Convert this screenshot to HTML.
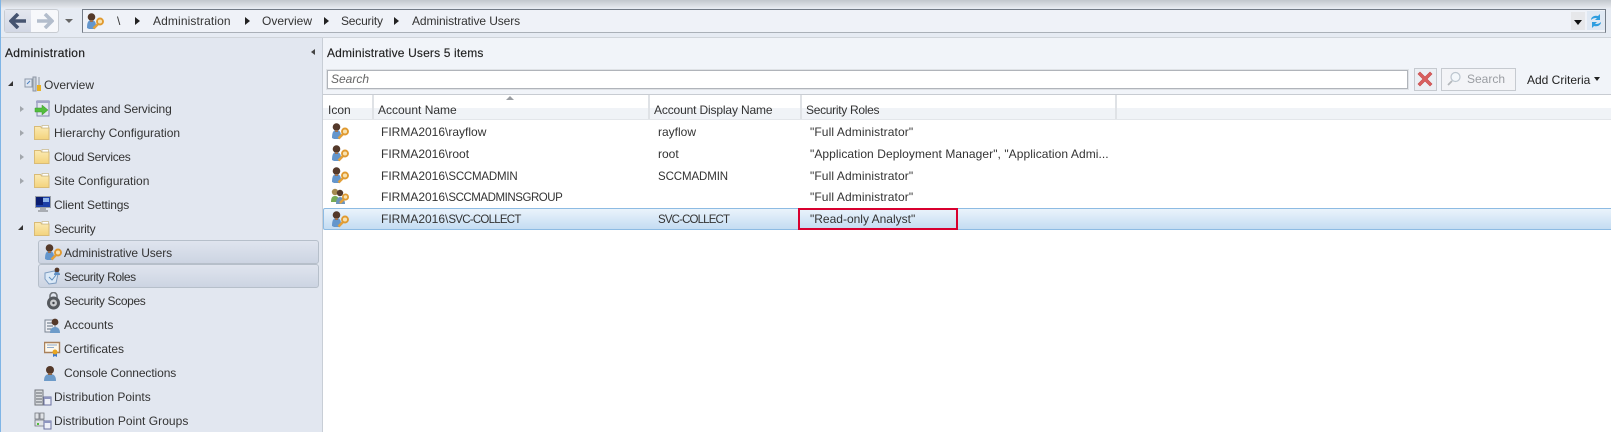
<!DOCTYPE html>
<html><head><meta charset="utf-8"><style>
html,body{margin:0;padding:0}
body{width:1611px;height:432px;overflow:hidden;position:relative;background:#fff;font-family:"Liberation Sans",sans-serif;font-size:12px;color:#2b2b2b}
#w{position:absolute;left:0;top:0;width:1611px;height:432px;overflow:hidden;filter:blur(.3px)}
.a{position:absolute}
.t{position:absolute;white-space:nowrap;line-height:16px;height:16px;font-size:12px;color:#333}
.c{font-size:11.5px}
svg.i{position:absolute;width:18px;height:18px;overflow:visible}
.tri{position:absolute;width:0;height:0}
.ex{position:absolute;left:20px;width:0;height:0;border-top:3.5px solid transparent;border-bottom:3.5px solid transparent;border-left:4.500px solid #a2a7ad}
</style></head><body><div id="w">
<svg width="0" height="0" style="position:absolute"><defs>
<linearGradient id="fg" x1="0" y1="0" x2="0" y2="1"><stop offset="0" stop-color="#fbeab4"/><stop offset="1" stop-color="#f3d37c"/></linearGradient>
<symbol id="admin" viewBox="0 0 18 18"><path d="M1 16c0-5 1-8 4.500-8S10 11 10 14l-1 3H3z" fill="#6496cc"/><circle cx="5.500" cy="5" r="3.800" fill="#54392a"/><path d="M4 8h3v2H4z" fill="#9a7050"/><path d="M12 12l-4.500 4.500" stroke="#e3a03a" stroke-width="2.600"/><circle cx="14" cy="9.500" r="3" fill="#f8e2b0" stroke="#e09a30" stroke-width="1.900"/></symbol>
<symbol id="group" viewBox="0 0 18 18"><path d="M0 15c0-4 1-6 4-6s4 2 4 6z" fill="#76ab56"/><circle cx="4" cy="5" r="3.200" fill="#a58a50"/><path d="M5 17c0-5 2-7 4-7s5 2 5 7z" fill="#6b94bd"/><circle cx="9" cy="6" r="3.200" fill="#54392a"/><path d="M13 12l-4 4" stroke="#e3a03a" stroke-width="2.400"/><circle cx="14.500" cy="10" r="2.600" fill="#f8e2b0" stroke="#e09a30" stroke-width="1.800"/></symbol>
<symbol id="folder" viewBox="0 0 18 18"><path d="M.5 2.500h6l1 1.500h7.500v11.500H.5z" fill="url(#fg)" stroke="#d9bb76"/><path d="M8 1.500h6.500v2.500H8z" fill="#fff" stroke="#c9b98a" stroke-width=".7"/></symbol>
<symbol id="user" viewBox="0 0 18 18"><path d="M3 17c0-5 2-7 6-7s6 2 6 7z" fill="#6d9bc9"/><circle cx="9" cy="6" r="4" fill="#54392a"/><path d="M7 9h4v2H7z" fill="#8a6448"/></symbol>
<symbol id="server" viewBox="0 0 18 18"><path d="M1 2h8v15H1z" fill="#d8dbde" stroke="#71767c"/><path d="M2 5h6M2 8h6M2 11h6M2 14h6" stroke="#62676d"/><path d="M10 9h7v8h-7z" fill="#eef0f8" stroke="#6a70a0"/><path d="M10 9h7v2h-7z" fill="#8e95c0"/></symbol>
</defs></svg>

<!-- top strip -->
<div class="a" style="left:0;top:0;width:1611px;height:8px;background:linear-gradient(#c2c7cd,#e6e9ee)"></div>
<div class="a" style="left:0;top:8px;width:1611px;height:29px;background:#e6ebf3"></div>
<div class="a" style="left:0;top:37px;width:1611px;height:1px;background:#cfd4da"></div>
<div class="a" style="left:0;top:0;width:1px;height:432px;background:#7fb5e6"></div>

<!-- nav buttons -->
<div class="a" style="left:4px;top:9px;width:53px;height:22px;border:1px solid #c8ccd2;border-radius:3px;background:#f7f8fb"></div>
<div class="a" style="left:5px;top:10px;width:26px;height:22px;background:linear-gradient(#e4e7ef,#d2d7e4)"></div>
<svg class="a" style="left:9px;top:13px" width="18" height="16" viewBox="0 0 18 16"><path d="M9 1L2 8l7 7M3 8h14" fill="none" stroke="#465470" stroke-width="3.600"/></svg>
<svg class="a" style="left:36px;top:13px" width="18" height="16" viewBox="0 0 18 16"><path d="M9 1l7 7-7 7M15 8H1" fill="none" stroke="#b3bdcc" stroke-width="3.600"/></svg>
<div class="tri" style="left:65px;top:19px;border-left:4px solid transparent;border-right:4px solid transparent;border-top:4px solid #666"></div>

<!-- address bar -->
<div class="a" style="left:82px;top:9px;width:1522px;height:22px;border:1px solid #737b86;border-bottom-color:#aab0b8;background:#eff2f8"></div>
<svg class="i" style="left:86px;top:12px"><use href="#admin"/></svg>
<div class="t" style="left:117px;top:13px">\</div>
<div class="tri" style="left:135px;top:17px;border-top:4px solid transparent;border-bottom:4px solid transparent;border-left:5px solid #222"></div>
<div class="t" style="left:153px;top:13px;letter-spacing:.12px">Administration</div>
<div class="tri" style="left:245px;top:17px;border-top:4px solid transparent;border-bottom:4px solid transparent;border-left:5px solid #222"></div>
<div class="t" style="left:262px;top:13px">Overview</div>
<div class="tri" style="left:324px;top:17px;border-top:4px solid transparent;border-bottom:4px solid transparent;border-left:5px solid #222"></div>
<div class="t" style="left:341px;top:13px;letter-spacing:-.2px">Security</div>
<div class="tri" style="left:394px;top:17px;border-top:4px solid transparent;border-bottom:4px solid transparent;border-left:5px solid #222"></div>
<div class="t" style="left:412px;top:13px;letter-spacing:-.1px">Administrative Users</div>
<div class="a" style="left:1571px;top:12px;width:14px;height:18px;background:#e6e7ea"></div>
<div class="tri" style="left:1574px;top:20px;border-left:4px solid transparent;border-right:4px solid transparent;border-top:5px solid #111"></div>
<div class="a" style="left:1587px;top:11px;width:18px;height:19px;background:#dfe8f3"></div>
<svg class="a" style="left:1589px;top:13px" width="14" height="16" viewBox="0 0 14 16"><path d="M2 7c0-3 3-5 7-4l2-2v6H6l2-2C6 5 4 5 2 7zM12 9c0 3-3 5-7 4l-2 2V9h5l-2 2c2 0 4 0 6-2z" fill="#2f9ee0"/></svg>

<!-- sidebar -->
<div class="a" style="left:1px;top:38px;width:321px;height:394px;background:#e2e7f0"></div>
<div class="a" style="left:322px;top:38px;width:1px;height:394px;background:#c8ced6"></div>
<div class="t" style="left:5px;top:45px;color:#222;-webkit-text-stroke:.2px #222;letter-spacing:.3px">Administration</div>
<div class="tri" style="left:311px;top:49px;border-top:3px solid transparent;border-bottom:3px solid transparent;border-right:4px solid #444"></div>

<div class="tri" style="left:8px;top:81px;border-left:5px solid transparent;border-bottom:5px solid #333"></div>
<svg class="a" style="left:24px;top:75px" width="18" height="18" viewBox="0 0 18 18"><path d="M1 4h7v8H1z" fill="#dfe6f2" stroke="#8d99aa"/><path d="M3 9l3-3" stroke="#4a80c0"/><path d="M9 2h3v14H9z" fill="#c8d0da" stroke="#8d96a3"/><path d="M14 2h2v8h-2z" fill="#b9c0ca"/><path d="M13 10h4v6h-4z" fill="#e7b126"/></svg>
<div class="t" style="left:44px;top:77px">Overview</div>

<div class="ex" style="top:106px"></div>
<svg class="a" style="left:34px;top:100px" width="18" height="18" viewBox="0 0 18 18"><path d="M3 1h12v15H3z" fill="#e3e5f0" stroke="#8185ab"/><path d="M2 1h14v2H2z" fill="#a2a5c7"/><path d="M1 8h7V5l6 5-6 5v-3H1z" fill="#53bd3d" stroke="#3b9a2e" stroke-width=".5"/></svg>
<div class="t" style="left:54px;top:101px;letter-spacing:-.15px">Updates and Servicing</div>

<div class="ex" style="top:130px"></div>
<svg class="i" style="left:34px;top:124px"><use href="#folder"/></svg>
<div class="t" style="left:54px;top:125px">Hierarchy Configuration</div>

<div class="ex" style="top:154px"></div>
<svg class="i" style="left:34px;top:148px"><use href="#folder"/></svg>
<div class="t" style="left:54px;top:149px;letter-spacing:-.3px">Cloud Services</div>

<div class="ex" style="top:178px"></div>
<svg class="i" style="left:34px;top:172px"><use href="#folder"/></svg>
<div class="t" style="left:54px;top:173px">Site Configuration</div>

<svg class="a" style="left:35px;top:196px" width="16" height="17" viewBox="0 0 16 17"><path d="M0 0h16v12H0z" fill="#9aa0a8"/><path d="M1 1h14v10H1z" fill="#1c3fa8"/><path d="M1 1h7v8H1z" fill="#0b1d70"/><path d="M8 2h6v4H8z" fill="#8eb4ea"/><path d="M5 12h6v2H5zM3 14h10v2H3z" fill="#a9adb3"/></svg>
<div class="t" style="left:54px;top:197px;letter-spacing:-.15px">Client Settings</div>

<div class="tri" style="left:18px;top:225px;border-left:5px solid transparent;border-bottom:5px solid #333"></div>
<svg class="i" style="left:34px;top:220px"><use href="#folder"/></svg>
<div class="t" style="left:54px;top:221px;letter-spacing:-.25px">Security</div>

<div class="a" style="left:38px;top:240px;width:279px;height:22px;border:1px solid #b6bfca;border-radius:3px;background:linear-gradient(#dfe4ee,#ccd4e2)"></div>
<svg class="i" style="left:44px;top:243px"><use href="#admin"/></svg>
<div class="t" style="left:64px;top:245px;letter-spacing:-.1px">Administrative Users</div>

<div class="a" style="left:38px;top:264px;width:279px;height:22px;border:1px solid #b6bfca;border-radius:3px;background:linear-gradient(#dfe4ee,#ccd4e2)"></div>
<svg class="a" style="left:44px;top:267px" width="18" height="18" viewBox="0 0 18 18"><path d="M1 6l9-2 4 3-2 9-7 1-4-5z" fill="#dbe9f7" stroke="#7d9cc0"/><path d="M5 10l3 3 4-5" stroke="#5d8ebf" fill="none"/><circle cx="13" cy="3" r="2.400" fill="#54392a"/><path d="M10 8c0-2 1-3 3-3s3 1 3 3z" fill="#5f8fc4"/></svg>
<div class="t" style="left:64px;top:269px;letter-spacing:-.4px">Security Roles</div>

<svg class="a" style="left:46px;top:292px" width="15" height="18" viewBox="0 0 15 18"><path d="M4 7V4a3.500 3.500 0 0 1 7 0v3" fill="none" stroke="#6d7176" stroke-width="1.600"/><circle cx="7.500" cy="11" r="6.500" fill="#55595e"/><circle cx="7.500" cy="11" r="3.500" fill="#c9cbce"/><circle cx="7.500" cy="11" r="1.200" fill="#40444a"/></svg>
<div class="t" style="left:64px;top:293px;letter-spacing:-.35px">Security Scopes</div>

<svg class="a" style="left:44px;top:316px" width="18" height="18" viewBox="0 0 18 18"><path d="M1 4h10v12H1z" fill="#eef0f5" stroke="#7a8492"/><path d="M3 7h6M3 10h6M3 13h5" stroke="#5f6b7c"/><path d="M6 17c0-4 2-6 5-6s5 2 5 6z" fill="#6d9bc9"/><circle cx="11" cy="6" r="3.400" fill="#54392a"/></svg>
<div class="t" style="left:64px;top:317px">Accounts</div>

<svg class="a" style="left:44px;top:340px" width="17" height="18" viewBox="0 0 17 18"><path d="M.5 2.500h15v10H.5z" fill="#fdf8ec" stroke="#a8805a" stroke-width="1.400"/><path d="M3 5h10M3 7.500h7" stroke="#8faacc"/><path d="M9 13h4v4l-2-1-2 1z" fill="#3f78c8"/><circle cx="11" cy="12" r="2.500" fill="#eaa620"/></svg>
<div class="t" style="left:64px;top:341px">Certificates</div>

<svg class="i" style="left:41px;top:364px"><use href="#user"/></svg>
<div class="t" style="left:64px;top:365px;letter-spacing:-.1px">Console Connections</div>

<svg class="i" style="left:34px;top:388px"><use href="#server"/></svg>
<div class="t" style="left:54px;top:389px">Distribution Points</div>

<svg class="a" style="left:34px;top:412px" width="18" height="18" viewBox="0 0 18 18"><path d="M1 1h4v6H1zM6 1h4v6H6z" fill="#dfe2e6" stroke="#71767c" stroke-width=".8"/><path d="M1 8h9v6H1z" fill="#dfe2e6" stroke="#71767c" stroke-width=".8"/><path d="M3 11h2v2H3z" fill="#53bd3d"/><path d="M10 9h7v8h-7z" fill="#eef0f8" stroke="#6a70a0"/><path d="M10 9h7v2h-7z" fill="#8e95c0"/></svg>
<div class="t" style="left:54px;top:413px;letter-spacing:.04px">Distribution Point Groups</div>

<!-- main top panel -->
<div class="a" style="left:323px;top:38px;width:1288px;height:56px;background:#f1f4f9"></div>
<div class="t" style="left:327px;top:45px;color:#222;-webkit-text-stroke:.15px #222;letter-spacing:.16px">Administrative Users 5 items</div>
<div class="a" style="left:327px;top:70px;width:1079px;height:17px;border:1px solid #b0b4ba;box-shadow:0 0 0 1px #dfe2e6;background:#fff"></div>
<div class="t" style="left:331px;top:71px;font-style:italic;color:#666">Search</div>
<div class="a" style="left:1414px;top:68px;width:21px;height:21px;border:1px solid #c6cad0;background:#eceff4"></div>
<svg class="a" style="left:1416px;top:70px" width="18" height="18" viewBox="0 0 18 18"><path d="M2 4l2-2 5 5 5-5 2 2-5 5 5 5-2 2-5-5-5 5-2-2 5-5z" fill="#d96060" stroke="#c64848" stroke-width=".6"/></svg>
<div class="a" style="left:1441px;top:68px;width:73px;height:21px;border:1px solid #c6cad0;background:#f3f4f7"></div>
<svg class="a" style="left:1446px;top:71px" width="16" height="16" viewBox="0 0 16 16"><circle cx="9.500" cy="6" r="4.500" fill="#f4f8fb" stroke="#bcc6cf" stroke-width="1.200"/><path d="M6 10l-4 4" stroke="#b4b8bc" stroke-width="1.800"/></svg>
<div class="t" style="left:1467px;top:71px;color:#9a9da2">Search</div>
<div class="t" style="left:1527px;top:72px;color:#222">Add Criteria</div>
<div class="tri" style="left:1594px;top:77px;border-left:3.5px solid transparent;border-right:3.5px solid transparent;border-top:4px solid #222"></div>

<!-- list header -->
<div class="a" style="left:323px;top:94px;width:1288px;height:1px;background:#c8ccd2"></div>
<div class="a" style="left:323px;top:95px;width:1288px;height:13px;background:#fff"></div>
<div class="a" style="left:323px;top:108px;width:1288px;height:11px;background:#f0f3f7"></div>
<div class="a" style="left:323px;top:119px;width:1288px;height:1px;background:#e3e6ea"></div>
<div class="a" style="left:372px;top:95px;width:2px;height:24px;background:#dfe2e6"></div>
<div class="a" style="left:648px;top:95px;width:2px;height:24px;background:#dfe2e6"></div>
<div class="a" style="left:800px;top:95px;width:2px;height:24px;background:#dfe2e6"></div>
<div class="a" style="left:1115px;top:95px;width:2px;height:24px;background:#dfe2e6"></div>
<div class="tri" style="left:506px;top:96px;border-left:4px solid transparent;border-right:4px solid transparent;border-bottom:4px solid #9a9da2"></div>
<div class="t" style="left:328px;top:102px">Icon</div>
<div class="t" style="left:378px;top:102px">Account Name</div>
<div class="t" style="left:654px;top:102px;letter-spacing:-.15px">Account Display Name</div>
<div class="t" style="left:806px;top:102px;letter-spacing:-.3px">Security Roles</div>

<!-- rows -->
<div class="a" style="left:323px;top:208px;width:1288px;height:20px;border:1px solid #8dbbe3;border-radius:2px;background:linear-gradient(#eaf3fb,#c4dcf2);box-sizing:content-box"></div>

<svg class="i" style="left:331px;top:122px"><use href="#admin"/></svg>
<svg class="i" style="left:331px;top:144px"><use href="#admin"/></svg>
<svg class="i" style="left:331px;top:166px"><use href="#admin"/></svg>
<svg class="i" style="left:331px;top:187px"><use href="#group"/></svg>
<svg class="i" style="left:331px;top:210px"><use href="#admin"/></svg>

<div class="t" style="left:381px;top:124px">FIRMA2016\rayflow</div>
<div class="t" style="left:658px;top:124px">rayflow</div>
<div class="t" style="left:810px;top:124px;letter-spacing:.1px">"Full Administrator"</div>

<div class="t" style="left:381px;top:146px">FIRMA2016\root</div>
<div class="t" style="left:658px;top:146px">root</div>
<div class="t" style="left:810px;top:146px;letter-spacing:.07px">"Application Deployment Manager", "Application Admi...</div>

<div class="t" style="left:381px;top:168px">FIRMA2016\<span class="c" style="letter-spacing:-.2px">SCCMADMIN</span></div>
<div class="t c" style="left:658px;top:169px;letter-spacing:-.1px">SCCMADMIN</div>
<div class="t" style="left:810px;top:168px;letter-spacing:.1px">"Full Administrator"</div>

<div class="t" style="left:381px;top:189px">FIRMA2016\<span class="c" style="letter-spacing:-.45px">SCCMADMINSGROUP</span></div>
<div class="t" style="left:810px;top:189px;letter-spacing:.1px">"Full Administrator"</div>

<div class="t" style="left:381px;top:211px">FIRMA2016\<span class="c" style="letter-spacing:-.75px">SVC-COLLECT</span></div>
<div class="t c" style="left:658px;top:212px;letter-spacing:-.85px">SVC-COLLECT</div>
<div class="t" style="left:810px;top:211px">"Read-only Analyst"</div>

<div class="a" style="left:798px;top:208px;width:156px;height:18px;border:2px solid #d8002f"></div>
</div></body></html>
